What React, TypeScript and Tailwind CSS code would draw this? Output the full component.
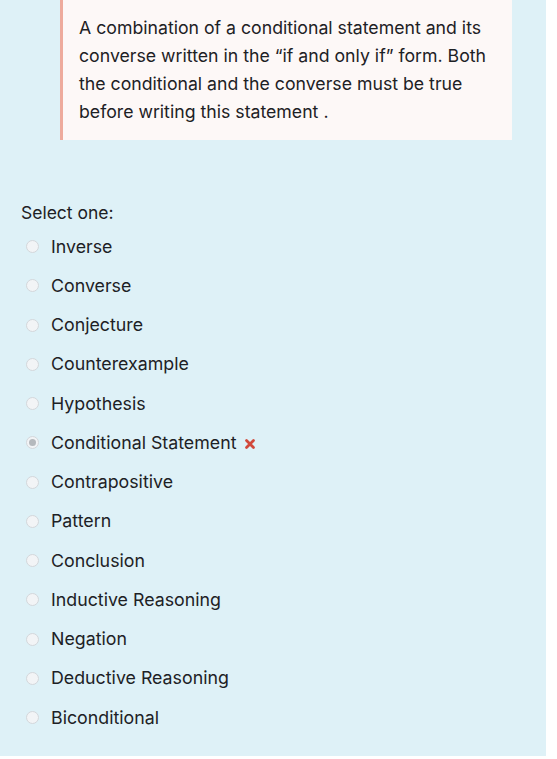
import React from "react";

const options = [
  "Inverse",
  "Converse",
  "Conjecture",
  "Counterexample",
  "Hypothesis",
  "Conditional Statement",
  "Contrapositive",
  "Pattern",
  "Conclusion",
  "Inductive Reasoning",
  "Negation",
  "Deductive Reasoning",
  "Biconditional",
];

const selected = "Conditional Statement";

function Radio({ checked }: { checked: boolean }) {
  return (
    <span className="w-[13px] h-[13px] rounded-full border border-[#d3d7db] bg-[#f2f4f6] flex items-center justify-center shrink-0">
      {checked && <span className="w-[7px] h-[7px] rounded-full bg-[#b5b9bd]" />}
    </span>
  );
}

function WrongMark() {
  return (
    <svg width="12" height="12" viewBox="0 0 12 12" className="ml-[7px] mt-[2px]">
      <path d="M2.5 2.5 L9.5 9.5 M9.5 2.5 L2.5 9.5" stroke="#d1493b" strokeWidth="2.8" strokeLinecap="round" />
    </svg>
  );
}

export default function App() {
  return (
    <div className="w-[557px] h-[759px] bg-white font-['Inter','Liberation_Sans',sans-serif] text-[#1d2125]">
      <div className="w-[546px] h-[756px] bg-[#def1f7]">
        <div className="ml-[60px] w-[452px] bg-[#fdf8f7] border-l-[3px] border-[#eeab9d] pl-[16px] pr-[12px] pt-[14px] pb-[14px]">
          <p className="text-[17.7px] leading-[28px]">
            A combination of a conditional statement and its converse written in the “if and only if” form. Both
            the conditional and the converse must be true before writing this statement .
          </p>
        </div>

        <div className="mt-[59px] pl-[21px]">
          <div className="text-[17.5px] leading-[28px]">Select one:</div>
          <div className="flex flex-col">
            {options.map((opt) => (
              <label key={opt} className="flex items-center h-[39.25px] pl-[5px]">
                <Radio checked={opt === selected} />
                <span className="ml-[12px] text-[17.8px] leading-[28px]">{opt}</span>
                {opt === selected && <WrongMark />}
              </label>
            ))}
          </div>
        </div>
      </div>
    </div>
  );
}
